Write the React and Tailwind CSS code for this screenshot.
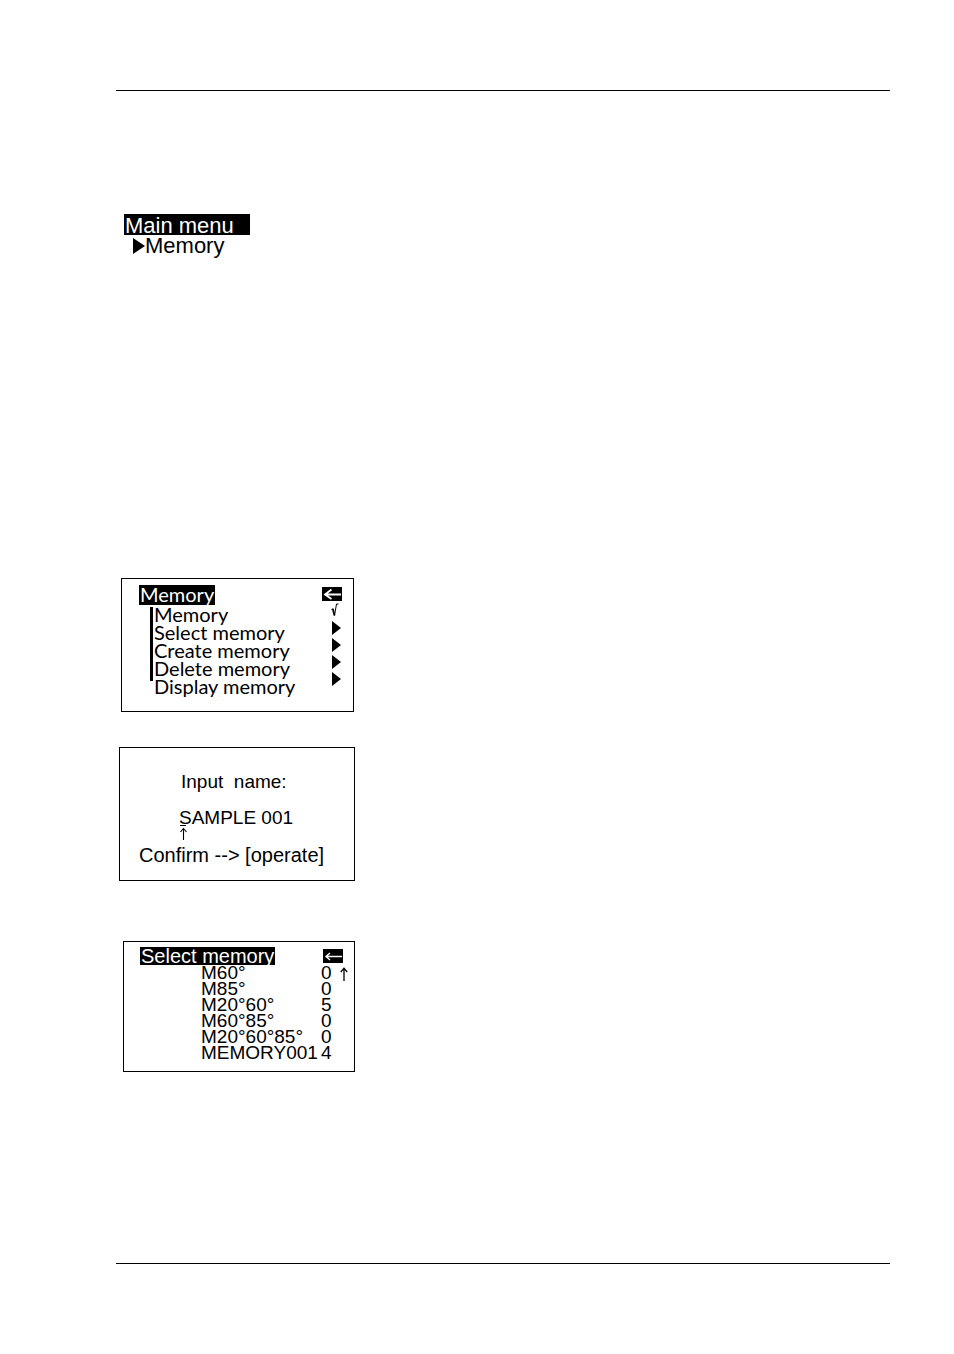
import React from "react";

const menuItems = ["Select memory", "Create memory", "Delete memory", "Display memory"];

const memories = [
  ["M60°", 0],
  ["M85°", 0],
  ["M20°60°", 5],
  ["M60°85°", 0],
  ["M20°60°85°", 0],
  ["MEMORY001", 4],
];

function Triangle({ className }) {
  return (
    <svg className={className} viewBox="0 0 10 14" fill="currentColor" preserveAspectRatio="none" aria-hidden="true">
      <path d="M0 0 L10 7 L0 14 Z" />
    </svg>
  );
}

function BackButton({ bold }) {
  return (
    <button type="button" aria-label="Back" className="flex h-3.5 w-5 items-center justify-center bg-black text-white">
      <svg className="h-3.5 w-5" viewBox="0 0 20 14" fill="none" stroke="currentColor" strokeWidth={bold ? 1.8 : 1.4} aria-hidden="true">
        {bold ? <path d="M3 7.5 H19 M9.5 2.5 L3 7.5 L9.5 12" /> : <path d="M3 7.5 H19 M7 4 L3 7.5 L7 11" />}
      </svg>
    </button>
  );
}

function UpArrow({ className }) {
  return (
    <svg className={className} viewBox="0 0 8 14" fill="none" stroke="currentColor" strokeWidth="1.3" aria-hidden="true">
      <path d="M4 14 V1.5 M0.8 5 L4 1.2 L7.2 5" />
    </svg>
  );
}

function MemoryMenu() {
  return (
    <section className="ml-[5px] flex h-[134px] w-[233px] justify-between border border-black pt-[6px] pr-[11px] pl-[17px] font-['Lato','Open_Sans',sans-serif] text-[20px] leading-[18px]">
      <div>
        <h2 className="h-5 w-[76px] bg-black pl-px text-white">Memory</h2>
        <ul className="relative pl-[15px] before:absolute before:top-[2px] before:left-[11px] before:h-[74px] before:w-[3px] before:bg-black">
          {["Memory", ...menuItems].map((item) => (
            <li key={item} className="h-[18px] whitespace-nowrap">
              <button type="button" className="block">{item}</button>
            </li>
          ))}
        </ul>
      </div>
      <div className="flex flex-col items-center pt-[2px]">
        <BackButton bold />
        <svg className="mt-0.5 ml-[5px] h-3.5 w-2" viewBox="0 0 8 14" fill="none" stroke="currentColor" role="img" aria-label="Memory on">
          <path d="M0.5 6.5 L1.8 5.8" />
          <path d="M1.8 5.8 L3.5 12.5" strokeWidth="1.8" />
          <path d="M3.5 12.5 L5.5 1 H7.5" />
        </svg>
        <div className="mt-1 ml-[9px] flex flex-col gap-[3px]">
          {menuItems.map((item) => (
            <Triangle key={item} className="h-3.5 w-[9px]" />
          ))}
        </div>
      </div>
    </section>
  );
}

function NameInput() {
  return (
    <section className="mt-[35px] ml-[3px] flex h-[134px] w-[236px] flex-col border border-black pt-6 pl-[19px] text-[19px] leading-5">
      <label htmlFor="sample-name" className="pl-[42px] whitespace-pre">Input  name:</label>
      <input id="sample-name" defaultValue="SAMPLE 001" className="mt-4 ml-10 h-5 w-[130px] bg-transparent p-0 outline-none" />
      <svg className="-mt-[3px] ml-10 h-4 w-2.5" viewBox="0 0 10 16" fill="none" stroke="currentColor" aria-hidden="true">
        <path d="M1 0.5 H7 M4.5 15 V4 M1.5 7 L4.5 3.5 L7.5 7" strokeWidth="1.1" />
      </svg>
      <p className="mt-1 text-xl leading-5 whitespace-nowrap">Confirm --&gt; [operate]</p>
    </section>
  );
}

function SelectMemory() {
  return (
    <section className="mt-[60px] ml-[7px] h-[131px] w-[232px] border border-black pt-[5px] pl-4">
      <header className="flex items-center justify-between pr-[11px]">
        <h2 className="h-[18px] w-[135px] bg-black pl-px text-xl leading-[18px] whitespace-nowrap text-white">Select memory</h2>
        <BackButton />
      </header>
      <div className="flex pl-[61px] text-[19px] leading-4">
        <table className="border-collapse">
          <tbody>
            {memories.map(([name, count]) => (
              <tr key={name} className="h-4">
                <td className="w-[120px] p-0 whitespace-nowrap">{name}</td>
                <td className="p-0">{count}</td>
              </tr>
            ))}
          </tbody>
        </table>
        <UpArrow className="mt-[2px] ml-2 h-3.5 w-2" />
      </div>
    </section>
  );
}

export default function App() {
  return (
    <div className="bg-white pt-[90px] pr-16 pb-[90px] pl-[116px] font-['Liberation_Sans',Arial,sans-serif] text-black">
      <main className="border-y border-black pt-[123px] pb-[191px]">
        <nav className="ml-2 w-[126px] text-[22px]">
          <h1 className="h-[21px] bg-black pl-px leading-[23px] text-white">Main menu</h1>
          <a href="#memory" className="flex h-[22px] items-center pl-[9px] leading-[22px]">
            <Triangle className="h-4 w-3 shrink-0" />
            Memory
          </a>
        </nav>
        <div id="memory" className="pt-[321px]">
          <MemoryMenu />
          <NameInput />
          <SelectMemory />
        </div>
      </main>
    </div>
  );
}
